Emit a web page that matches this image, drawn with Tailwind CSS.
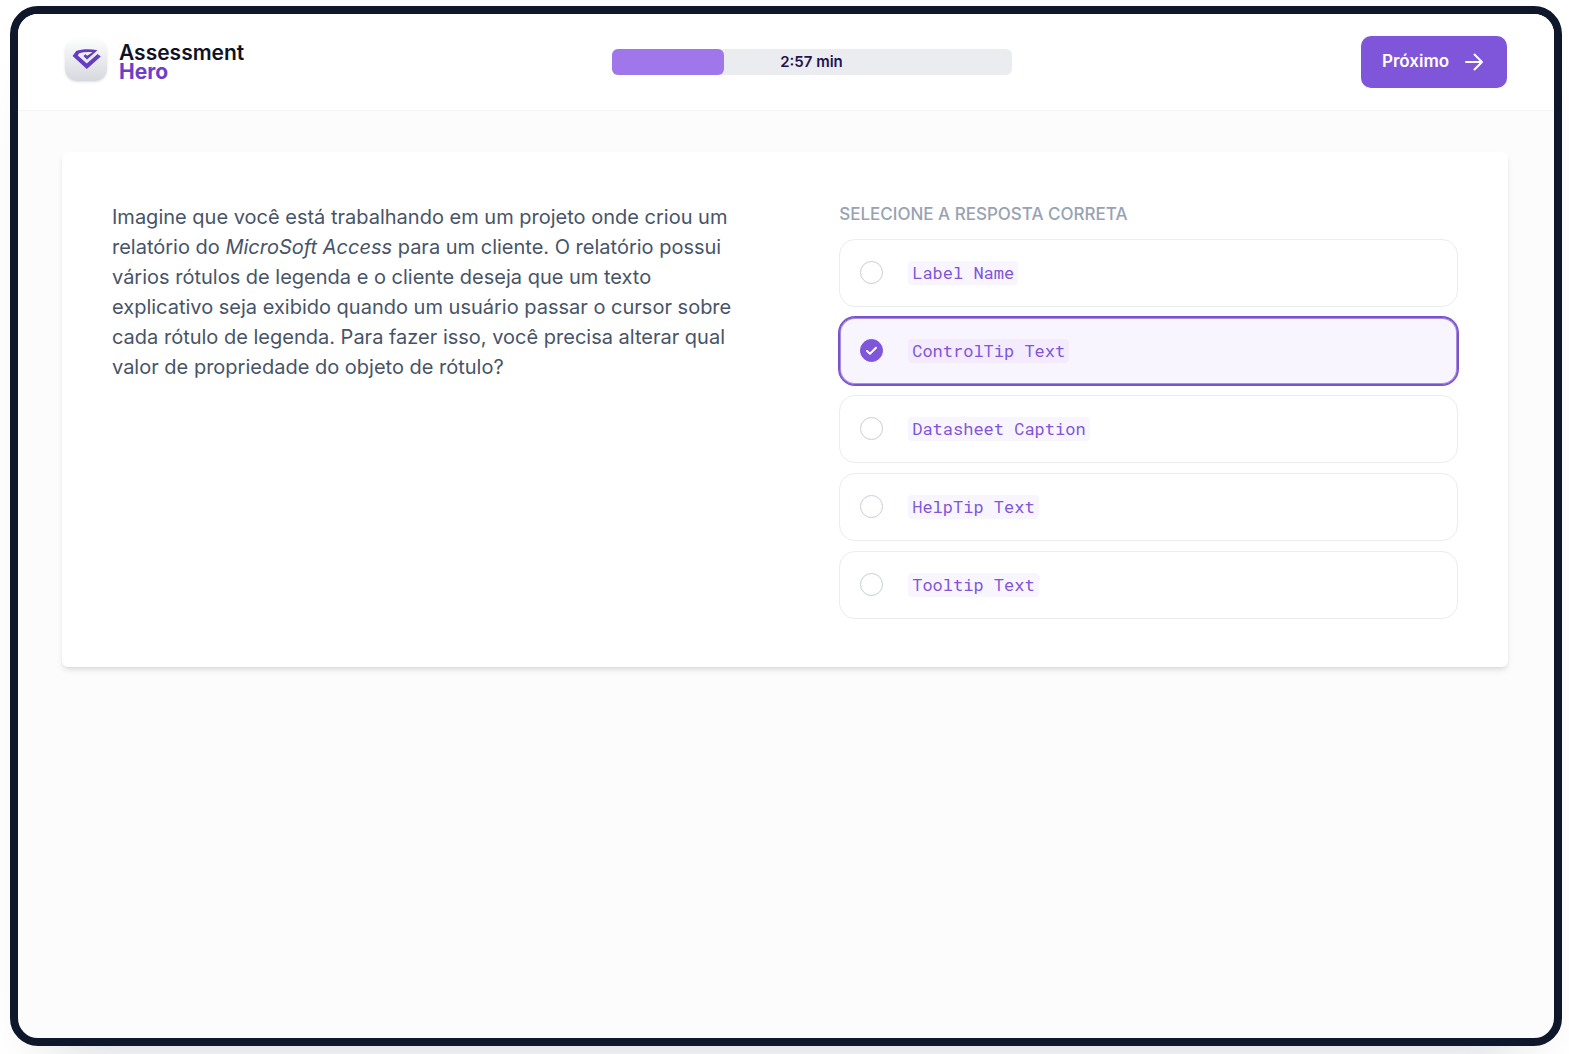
<!DOCTYPE html>
<html lang="pt-BR">
<head>
    <meta charset="UTF-8">
    <meta name="viewport" content="width=device-width, initial-scale=1.0">
    <title>Assessment Hero</title>
    <script src="https://cdn.jsdelivr.net/npm/@tailwindcss/browser@4"></script>
</head>
<body class="bg-white font-['Inter',sans-serif] min-h-screen flex flex-col pt-1.5 pb-2 pl-2.5 pr-[7px] overflow-hidden">

    <div class="flex-1 flex flex-col border-8 border-[#0f172a] rounded-[28px] bg-[#fcfcfc] shadow-[0_40px_60px_-40px_rgb(16_24_40/0.2)] overflow-hidden">

        <!-- Header -->
        <header class="flex items-center justify-between h-[97px] pl-11 pr-[47px] bg-white border-b border-gray-100">
            <a href="#" class="flex items-center gap-3 w-50 pl-[3px]">
                <svg class="size-[42px] mb-1 rounded-xl shadow-sm" viewBox="0 0 42 42" aria-hidden="true">
                    <defs>
                        <linearGradient id="tile" x1="0" y1="0" x2="0" y2="1">
                            <stop offset="0" stop-color="#fdfdfd"/>
                            <stop offset="1" stop-color="#d5d8de"/>
                        </linearGradient>
                    </defs>
                    <rect width="42" height="42" rx="9" fill="url(#tile)"/>
                    <path d="M32.500 11.200C25 9.800 16 10.200 11.200 12L7.600 17L21.800 30L35.800 17.400L32.600 15L21.800 24.600L12.800 16.400L14.200 14.200C18.500 12.900 23 12.800 27.500 13.200L22.200 16.800L20.400 15.200L18.400 17L22 20.400Z" fill="#643cc0"/>
                </svg>
                <span class="flex flex-col text-[21px] leading-[19px] font-semibold text-[#0f1225]">
                    Assessment
                    <span class="font-bold text-[#6b3fc9]">Hero</span>
                </span>
            </a>

            <!-- Timer -->
            <div class="relative w-[400px] h-[26px] rounded-md bg-[#ebecef]" role="progressbar" aria-valuemin="0" aria-valuemax="100" aria-valuenow="28">
                <div class="h-full rounded-md bg-[#a077ea]" style="width: 28%"></div>
                <span class="absolute inset-0 flex items-center justify-center text-[15px] font-semibold text-[#1f1450]">2:57 min</span>
            </div>

            <button type="button" class="flex items-center justify-between w-[146px] h-13 px-[21px] rounded-[10px] bg-[#7f56d9] text-[17px] font-semibold text-white">
                Próximo
                <svg class="size-6" viewBox="0 0 24 24" fill="none" stroke="currentColor" stroke-width="2" stroke-linecap="round" stroke-linejoin="round" aria-hidden="true">
                    <path d="M4 12h16M12.5 4.500l7.500 7.500l-7.500 7.500"/>
                </svg>
            </button>
        </header>

        <!-- Question -->
        <main class="pl-11 pr-[46px] pt-[41px]">
            <form class="grid grid-cols-[51fr_50fr] gap-24 px-[50px] pt-[50px] pb-12 rounded-md bg-white shadow-md">
                <p class="text-xl leading-[30px] text-[#475467]">
                    Imagine que você está trabalhando em um projeto onde criou um relatório do <em>MicroSoft Access</em> para um cliente. O relatório possui vários rótulos de legenda e o cliente deseja que um texto explicativo seja exibido quando um usuário passar o cursor sobre cada rótulo de legenda. Para fazer isso, você precisa alterar qual valor de propriedade do objeto de rótulo?
                </p>

                <fieldset class="flex flex-col">
                    <legend class="mb-3 text-[17px] leading-[25px] font-medium uppercase text-[#98a2b3]">Selecione a resposta correta</legend>
                    <div id="options" class="flex flex-col gap-2.5"></div>
                </fieldset>
            </form>
        </main>
    </div>

    <script>
        const options = ['Label Name', 'ControlTip Text', 'Datasheet Caption', 'HelpTip Text', 'Tooltip Text'];
        const selected = 1;

        // Render one radio row per answer
        document.getElementById('options').innerHTML = options.map((text, i) => `
            <label class="group flex items-center gap-6 h-17 px-5 rounded-2xl border border-[#ebecee] has-checked:border-[#7a52ce] has-checked:ring-1 has-checked:ring-[#7a52ce] has-checked:inset-ring-1 has-checked:inset-ring-[#a98ee0] has-checked:bg-[#f9f5ff]">
                <span class="grid size-6 shrink-0">
                    <input type="radio" name="answer" value="${i}" ${i === selected ? 'checked' : ''} class="col-start-1 row-start-1 appearance-none size-[23px] rounded-full border border-[#c9cdd5] bg-white checked:border-[#7f56d9] checked:bg-[#7f56d9]">
                    <svg class="hidden group-has-checked:block col-start-1 row-start-1 size-[23px] pointer-events-none" viewBox="0 0 23 23" fill="none" stroke="#fff" stroke-width="2" stroke-linecap="round" stroke-linejoin="round" aria-hidden="true">
                        <path d="M7 12l3 2.800L16 8.700"/>
                    </svg>
                </span>
                <code class="px-1 rounded-sm bg-[#f9f5ff] group-has-checked:bg-[#f4ebff] font-['Roboto_Mono','Liberation_Mono',monospace] text-[17px] leading-6 text-[#7f56d9]">${text}</code>
            </label>
        `).join('');
    </script>
</body>
</html>
